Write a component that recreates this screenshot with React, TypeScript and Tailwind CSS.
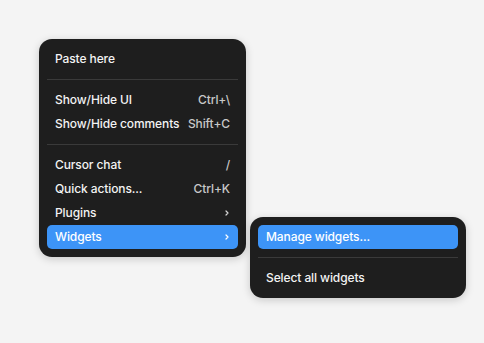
import React from 'react';

type Item = { label: string; shortcut?: string; submenu?: boolean; active?: boolean };

const Chevron: React.FC = () => (
  <svg width="4" height="6" viewBox="0 0 4 6" fill="none" className="mr-[1px]">
    <path d="M1 1L3 3L1 5" stroke="currentColor" strokeWidth="1.2" strokeLinecap="round" strokeLinejoin="round" />
  </svg>
);

const MenuRow: React.FC<{ item: Item }> = ({ item }) => (
  <div
    className={`flex h-6 items-center justify-between whitespace-nowrap rounded-[5px] px-2 text-[12px] font-medium tracking-[-0.1px] ${
      item.active ? 'bg-[#3d94f7] text-white' : 'text-[#f3f3f3]'
    }`}
  >
    <span>{item.label}</span>
    {item.shortcut && <span className="ml-1 text-[#c8c8c8]">{item.shortcut}</span>}
    {item.submenu && (
      <span className={item.active ? 'text-white' : 'text-[#d6d6d6]'}>
        <Chevron />
      </span>
    )}
  </div>
);

const Separator: React.FC = () => <div className="my-2 h-px bg-[#3a3a3a]" />;

export default function App() {
  return (
    <div
      className="h-[343px] w-[484px] bg-[#f4f4f4] pl-[39px] pt-[39px]"
      style={{ fontFamily: 'Inter, "Noto Sans", sans-serif' }}
    >
      <div className="flex items-start">
        <div className="w-[207px] shrink-0 rounded-[13px] bg-[#1e1e1e] p-2 shadow-[0_2px_8px_rgba(0,0,0,0.18)]">
          <MenuRow item={{ label: 'Paste here' }} />
          <Separator />
          <MenuRow item={{ label: 'Show/Hide UI', shortcut: 'Ctrl+\\' }} />
          <MenuRow item={{ label: 'Show/Hide comments', shortcut: 'Shift+C' }} />
          <Separator />
          <MenuRow item={{ label: 'Cursor chat', shortcut: '/' }} />
          <MenuRow item={{ label: 'Quick actions...', shortcut: 'Ctrl+K' }} />
          <MenuRow item={{ label: 'Plugins', submenu: true }} />
          <MenuRow item={{ label: 'Widgets', submenu: true, active: true }} />
        </div>
        <div className="ml-[4px] mt-[178px] w-[216px] shrink-0 rounded-[13px] bg-[#1e1e1e] p-2 shadow-[0_2px_8px_rgba(0,0,0,0.18)]">
          <MenuRow item={{ label: 'Manage widgets...', active: true }} />
          <Separator />
          <MenuRow item={{ label: 'Select all widgets' }} />
        </div>
      </div>
    </div>
  );
}
